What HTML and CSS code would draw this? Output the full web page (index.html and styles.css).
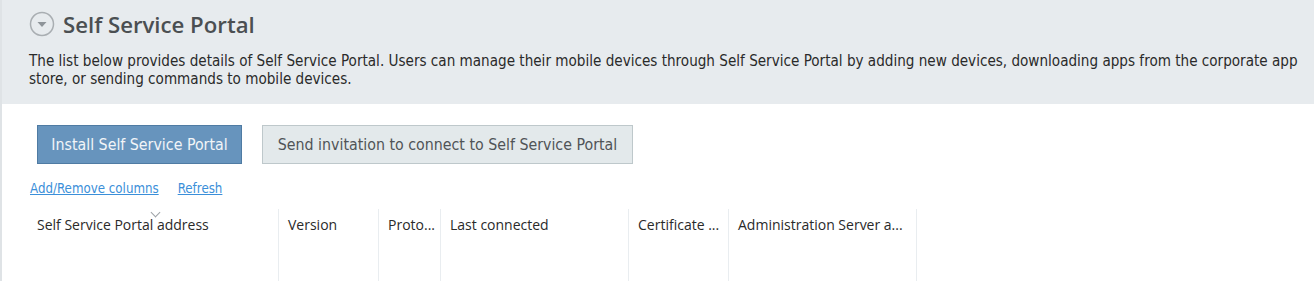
FILE: index.html
```html
<!DOCTYPE html>
<html lang="en">
<head>
  <meta charset="UTF-8">
  <title>Self Service Portal</title>
  <link rel="stylesheet" href="styles.css">
</head>
<body>
  <div class="page">
    <!-- Section header -->
    <div class="intro">
      <h1>
        <span class="toggle">
          <svg width="26" height="26" viewBox="0 0 26 26">
            <circle cx="13" cy="13" r="11.5" fill="none" stroke="#a9aeb2" stroke-width="1.5"/>
            <path d="M8.5 11 L17.5 11 L13 16 Z" fill="#8e9499"/>
          </svg>
        </span>
        Self Service Portal
      </h1>
      <p>The list below provides details of Self Service Portal. Users can manage their mobile devices through Self Service Portal by adding new devices, downloading apps from the corporate app<br>store, or sending commands to mobile devices.</p>
    </div>

    <!-- Actions -->
    <div class="actions">
      <button class="btn btn-primary">Install Self Service Portal</button>
      <button class="btn btn-secondary">Send invitation to connect to Self Service Portal</button>
    </div>

    <div class="links">
      <a href="#">Add/Remove columns</a>
      <a href="#">Refresh</a>
    </div>

    <!-- List -->
    <div class="grid">
      <div class="col col-address"><span class="sort"></span>Self Service Portal address</div>
      <div class="col col-version">Version</div>
      <div class="col col-proto">Proto...</div>
      <div class="col col-last">Last connected</div>
      <div class="col col-cert">Certificate ...</div>
      <div class="col col-admin">Administration Server a...</div>
    </div>
  </div>
</body>
</html>
```

FILE: styles.css
```css
:root {
  --band-color: #e7ebee;
  --title-color: #4b4f52;
  --text-color: #2a2a2a;
  --primary-color: #6794bd;
  --primary-border: #4f7ba3;
  --secondary-color: #e3e9eb;
  --secondary-border: #bec8cb;
  --link-color: #3b8fd9;
  --line-color: #e9edf0;
  --ui-font: "Open Sans", "Noto Sans", Arial, sans-serif;
  --text-font: "DejaVu Sans Condensed", "DejaVu Sans", sans-serif;
}
html, body {
  margin: 0;
  padding: 0;
  background: #fff;
}
.page {
  height: 281px;
  border-left: 2px solid #dfe3e6;
  overflow: hidden;
  font-family: var(--ui-font);
  color: var(--text-color);
}
.intro {
  background-color: var(--band-color);
  height: 104px;
  padding: 0 0 0 27px;
  box-sizing: border-box;
}
h1 {
  margin: 0;
  padding-top: 9px;
  display: flex;
  align-items: center;
  font-size: 22.2px;
  font-weight: 600;
  color: var(--title-color);
  height: 30px;
}
.toggle {
  display: inline-flex;
  width: 26px;
  height: 26px;
  margin-right: 8px;
}
.intro p {
  margin: 13px 0 0;
  font-family: var(--text-font);
  font-stretch: condensed;
  font-size: 15.1px;
  line-height: 18px;
  color: var(--text-color);
  white-space: nowrap;
}
.actions {
  display: flex;
  gap: 20px;
  padding: 21px 0 0 35px;
}
.btn {
  height: 39px;
  padding: 0 10px;
  font-family: var(--text-font);
  font-stretch: condensed;
  font-size: 15.8px;
  border: 1px solid;
  border-radius: 0;
}
.btn-primary {
  width: 205px;
  background-color: var(--primary-color);
  border-color: var(--primary-border);
  color: #f2f5f8;
}
.btn-secondary {
  width: 371px;
  background-color: var(--secondary-color);
  border-color: var(--secondary-border);
  color: #505457;
}
.links {
  display: flex;
  gap: 19px;
  padding: 17px 0 0 28px;
  font-family: var(--text-font);
  font-stretch: condensed;
  font-size: 13.2px;
  line-height: 16px;
}
.links a {
  color: var(--link-color);
}
.grid {
  display: flex;
  margin: 12px 0 0 26px;
  height: 80px;
}
.col {
  position: relative;
  box-sizing: border-box;
  padding: 7px 0 0 9px;
  font-size: 14px;
  line-height: 18px;
  color: var(--text-color);
  border-right: 1px solid var(--line-color);
  white-space: nowrap;
}
.col-address { width: 251px; }
.col-version { width: 100px; }
.col-proto { width: 62px; }
.col-last { width: 188px; }
.col-cert { width: 100px; }
.col-admin { width: 188px; }
.sort {
  position: absolute;
  left: 124px;
  top: 0;
  width: 6px;
  height: 6px;
  border-right: 1px solid #9ea3a7;
  border-bottom: 1px solid #9ea3a7;
  transform: rotate(45deg);
}
```
